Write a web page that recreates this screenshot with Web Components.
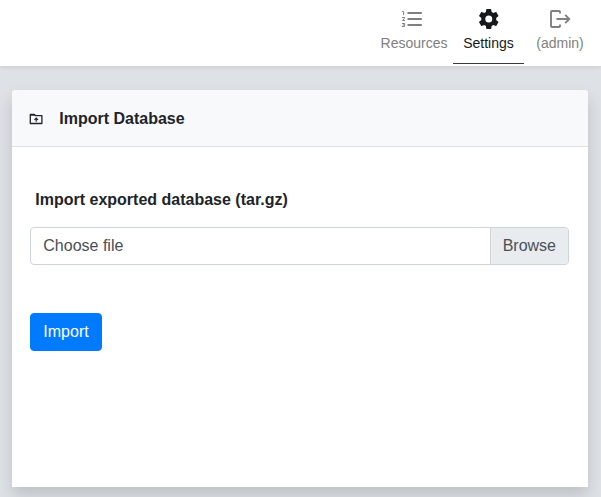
<!DOCTYPE html>
<html lang="en"><head><meta charset="utf-8"><title>Import Database</title>
<style>
html,body{height:100%}
body{margin:0;background:#dee2e6;color:#212529;font:16px/24px "Liberation Sans",Arial,sans-serif;overflow:hidden}
</style></head><body>
<app-shell>
<nav-bar slot="nav">
<nav-item style="width:78px" label="Resources"><svg style="margin-right:4px" viewBox="0 0 24 24" width="24" height="24"><path d="M7.500 5h14.300v2H7.500zm0 6h14.300v2H7.500zm0 6h14.300v2H7.500z" fill="currentColor"/><path d="M2.200 4.500H3.600v3.600M2 10.500h2.700v.6L2.400 13.500h2.700M2 16.500h2.600v3H2M2.800 18h1.800" fill="none" stroke="currentColor" stroke-width="1"/></svg></nav-item>
<nav-item active style="width:71px" label="Settings"><svg viewBox="0 0 24 24" width="24" height="24"><path fill="currentColor" d="M12 15.500A3.500 3.500 0 0 1 8.500 12 3.500 3.500 0 0 1 12 8.500a3.500 3.500 0 0 1 3.500 3.500 3.500 3.500 0 0 1-3.500 3.500m7.430-2.530c.04-.32.07-.64.07-.97s-.03-.66-.07-1l2.110-1.630c.19-.15.24-.42.12-.64l-2-3.460c-.12-.22-.39-.31-.61-.22l-2.490 1c-.52-.39-1.060-.73-1.690-.98l-.37-2.650A.506.506 0 0 0 14 2h-4c-.25 0-.46.18-.5.42l-.37 2.650c-.63.25-1.170.59-1.690.98l-2.490-1c-.22-.09-.49 0-.61.22l-2 3.460c-.13.22-.07.49.12.64L4.570 11c-.04.34-.07.67-.07 1s.03.65.07.97l-2.110 1.660c-.19.15-.25.42-.12.64l2 3.460c.12.22.39.3.61.22l2.490-1.010c.52.4 1.060.74 1.690.99l.37 2.650c.04.24.25.42.5.42h4c.25 0 .46-.18.5-.42l.37-2.650c.63-.26 1.170-.59 1.690-.99l2.490 1.010c.22.08.49 0 .61-.22l2-3.460c.12-.22.07-.49-.12-.64z" transform="translate(-.25 0)"/></svg></nav-item>
<nav-item style="width:72px" label="(admin)"><svg viewBox="0 0 24 24" width="24" height="24"><path d="M12 6.500V5Q12 4 11 4H4Q3 4 3 5V19Q3 20 4 20H11Q12 20 12 19V17.500M8.500 12H21M17.200 7.900L21.300 12L17.200 16.100" fill="none" stroke="currentColor" stroke-width="1.900"/></svg></nav-item>
</nav-bar>
<panel-card heading="Import Database">
<svg slot="icon" viewBox="0 0 14 12" width="14" height="12"><path d="M1.300 1.300H5.300L6.500 2.700H12.900V10.500H1.300Z" fill="none" stroke="currentColor" stroke-width="1.300" stroke-linejoin="round"/><path d="M1 1H5.500L7 2.700H1z" fill="currentColor"/><path d="M7.200 8.800V5.200M5.400 6.900L7.200 5.100L9 6.900" fill="none" stroke="currentColor" stroke-width="1.200"/></svg>
<file-field label="Import exported database (tar.gz)"></file-field>
<action-button>Import</action-button>
</panel-card>
</app-shell>
<script>
function define(name, markup) {
  customElements.define(name, class extends HTMLElement {
    constructor() {
      super();
      this.attachShadow({mode:'open'}).innerHTML = markup;
      this.shadowRoot.querySelectorAll('[data-text]').forEach(n => {
        n.textContent = this.getAttribute(n.dataset.text);
      });
    }
  });
}
define('app-shell', `<style>:host{display:flex;flex-direction:column;height:100vh}main{padding:24px 13px 10px 12px;flex:1;display:flex}::slotted(panel-card){flex:1}</style><slot name="nav"></slot><main><slot></slot></main>`);
define('nav-bar', `<style>:host{display:flex;justify-content:flex-end;box-sizing:border-box;height:66px;padding-right:5px;background:#fff;box-shadow:0 2px 4px rgba(0,0,0,.075)}</style><slot></slot>`);
define('nav-item', `<style>:host{display:flex;flex-direction:column;align-items:center;box-sizing:border-box;height:64px;padding-top:7px;color:#808080;font-size:14px;line-height:22px;border-bottom:1px solid transparent}:host([active]){color:#16181b;border-color:#343a40}::slotted(svg){display:block}span{margin-top:1px}</style><slot></slot><span data-text="label"></span>`);
define('panel-card', `<style>:host{display:block;background:#fff;border-radius:4px 4px 0 0;box-shadow:0 8px 16px rgba(0,0,0,.15)}header{display:flex;align-items:center;box-sizing:border-box;height:57px;padding-left:17px;gap:16px;background:#f8f9fa;border-bottom:1px solid #dee2e6;border-radius:4px 4px 0 0;font-weight:700}header span{margin-top:2px;padding-left:.3px}::slotted(svg){display:block;margin-top:2px}section{padding:41px 19px 0 18px}</style><header><slot name="icon"></slot><span data-text="heading"></span></header><section><slot></slot></section>`);
define('file-field', `<style>:host{display:block;margin-bottom:48px}label{display:block;font-weight:700;padding-left:5.3px;margin-bottom:15px}.box{display:flex;justify-content:space-between;box-sizing:border-box;height:38px;border:1px solid #ced4da;border-radius:4px;color:#495057;overflow:hidden}.box span{padding:6px 12px}.box .first{padding-left:12.300px}.box .browse{background:#e9ecef;border-left:1px solid #ced4da}</style><label data-text="label"></label><div class="box"><span class="first">Choose file</span><span class="browse">Browse</span></div>`);
define('action-button', `<style>:host{display:block}button{display:block;font:inherit;color:#fff;background:#007bff;border:1px solid #007bff;border-radius:4px;padding:6px 12px;width:72px;height:38px}</style><button><slot></slot></button>`);
</script></body></html>
